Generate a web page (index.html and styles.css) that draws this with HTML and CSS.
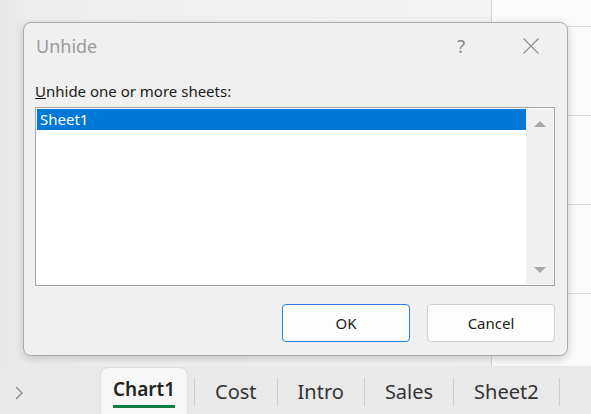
FILE: index.html
```html
<!DOCTYPE html>
<html lang="en">
<head>
<meta charset="utf-8">
<title>Unhide</title>
<link rel="stylesheet" href="styles.css">
</head>
<body>
<div class="app">
  <div class="workspace">
    <div class="chart-area"></div>
    <div class="grid-area">
      <div class="grid-row"></div>
      <div class="grid-row"></div>
      <div class="grid-row"></div>
      <div class="grid-row"></div>
    </div>
  </div>
  <div class="tabbar">
    <div class="nav">
      <svg class="chevron" width="8" height="14" viewBox="0 0 8 14"><path d="M1 1 L7 7 L1 13" fill="none" stroke="#8a8a8a" stroke-width="1.4"/></svg>
    </div>
    <div class="tab active"><span class="tab-label">Chart1</span></div>
    <div class="sep"></div>
    <div class="tab">Cost</div>
    <div class="sep"></div>
    <div class="tab">Intro</div>
    <div class="sep"></div>
    <div class="tab">Sales</div>
    <div class="sep"></div>
    <div class="tab">Sheet2</div>
    <div class="sep"></div>
  </div>

  <div class="dialog">
    <div class="titlebar">
      <span class="title">Unhide</span>
      <span class="help">?</span>
      <svg class="close" width="16" height="16" viewBox="0 0 16 16"><path d="M0.5 0.5 L15.5 15.5 M15.5 0.5 L0.5 15.5" stroke="#909090" stroke-width="1.2" fill="none"/></svg>
    </div>
    <div class="body">
      <div class="label"><span class="u">U</span>nhide one or more sheets:</div>
      <div class="listbox">
        <div class="list">
          <div class="item selected">Sheet1</div>
        </div>
        <div class="scrollbar">
          <svg width="12" height="8" viewBox="0 0 12 8"><path d="M0 7 L6 1 L12 7 Z" fill="#a6a6a6"/></svg>
          <svg width="12" height="8" viewBox="0 0 12 8"><path d="M0 1 L6 7 L12 1 Z" fill="#a6a6a6"/></svg>
        </div>
      </div>
      <div class="buttons">
        <button class="btn primary">OK</button>
        <button class="btn">Cancel</button>
      </div>
    </div>
  </div>
</div>
</body>
</html>
```

FILE: styles.css
```css
* { box-sizing: border-box; }
html, body {
  margin: 0;
  padding: 0;
}
body {
  width: 591px;
  height: 414px;
  overflow: hidden;
  font-family: "Noto Sans", "Open Sans", sans-serif;
  background: #ececec;
}
.app {
  position: relative;
  width: 591px;
  height: 414px;
  display: flex;
  flex-direction: column;
}
.workspace {
  height: 366px;
  display: flex;
}
.chart-area {
  flex: 1;
  background: linear-gradient(to right, #e6e6e6 0px, #eeeeee 40px, #f1f1f1 200px, #f3f3f3 100%);
}
.grid-area {
  width: 100px;
  border-left: 1px solid #d4d4d4;
  background: #fafafa;
  padding-top: 26px;
}
.grid-row {
  height: 89px;
  border-top: 1px solid #dcdcdc;
}
.tabbar {
  height: 48px;
  background: #e9e9e9;
  display: flex;
  align-items: stretch;
  padding-top: 1px;
}
.nav {
  width: 100px;
  display: flex;
  align-items: center;
  padding-left: 15px;
  padding-top: 4px;
}
.tab {
  display: flex;
  align-items: center;
  padding: 2px 20px 0 20px;
  font-size: 20px;
  color: #333333;
}
.tab.active {
  width: 88px;
  justify-content: center;
  padding: 0;
  margin-right: 6px;
  background: #f6f6f6;
  border-radius: 8px 8px 0 0;
  border: 1px solid #dedede;
  border-bottom: none;
  font-weight: 600;
  font-size: 19px;
  color: #222222;
}
.tab-label {
  position: relative;
  padding-bottom: 4px;
  margin-top: 2px;
  border-bottom: 3px solid #107c41;
  line-height: 24px;
}
.sep {
  width: 1px;
  background: #cfcfcf;
  margin: 11px 0 8px 0;
}

.dialog {
  position: absolute;
  left: 23px;
  top: 22px;
  width: 545px;
  height: 334px;
  background: #f0f0f0;
  border: 1px solid #a9a9a9;
  border-radius: 8px;
  box-shadow: 0 3px 10px rgba(0, 0, 0, 0.18);
  display: flex;
  flex-direction: column;
}
.titlebar {
  height: 46px;
  display: flex;
  align-items: center;
  padding-left: 12px;
  padding-right: 28px;
}
.title {
  flex: 1;
  font-size: 18px;
  color: #9a9a9a;
}
.help {
  font-size: 18px;
  color: #8a8a8a;
  margin-right: 58px;
}
.close {
  display: block;
}
.body {
  flex: 1;
  display: flex;
  flex-direction: column;
  padding: 12px 12px 12px 11px;
}
.label {
  font-size: 15px;
  color: #1a1a1a;
  line-height: 20px;
  height: 20px;
  margin-bottom: 6px;
}
.u { text-decoration: underline; }
.listbox {
  height: 179px;
  border: 1px solid #a3a3a3;
  background: #ffffff;
  display: flex;
  padding: 1px;
}
.list {
  flex: 1;
}
.item {
  height: 21px;
  line-height: 21px;
  font-size: 15px;
  padding-left: 3px;
  color: #1a1a1a;
}
.item.selected {
  background: #0078d7;
  color: #ffffff;
}
.scrollbar {
  width: 27px;
  background: #f0f0f0;
  display: flex;
  flex-direction: column;
  justify-content: space-between;
  align-items: center;
  padding: 11px 0 10px 0;
}
.scrollbar svg { display: block; }
.buttons {
  display: flex;
  justify-content: flex-end;
  gap: 17px;
  margin-top: 18px;
}
.btn {
  width: 128px;
  height: 38px;
  background: #fdfdfd;
  border: 1px solid #d0d0d0;
  border-radius: 4px;
  font-family: "Noto Sans", "Open Sans", sans-serif;
  font-size: 15px;
  color: #1a1a1a;
  padding: 0;
}
.btn.primary {
  border-color: #2b7fd6;
}
```
